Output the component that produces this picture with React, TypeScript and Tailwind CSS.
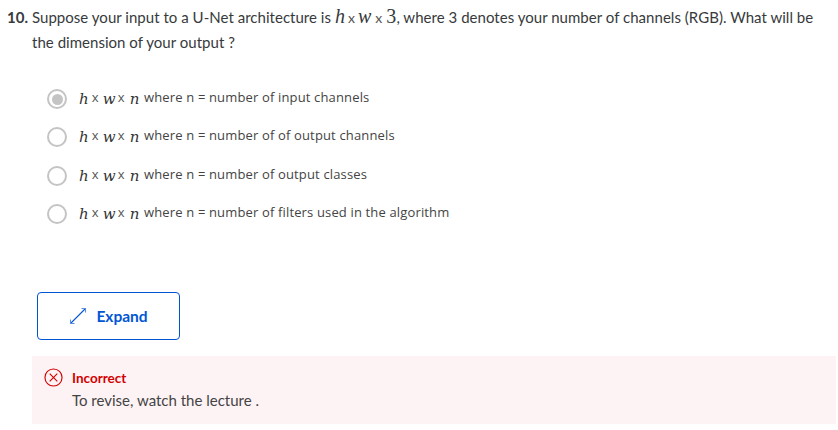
import type { ReactNode } from 'react';

const options = [
  { text: 'where n = number of input channels', selected: true },
  { text: 'where n = number of of output channels', selected: false },
  { text: 'where n = number of output classes', selected: false },
  { text: 'where n = number of filters used in the algorithm', selected: false },
];

function MathVar({ children }: { children: ReactNode }) {
  return <span className="font-['DejaVu_Serif',serif] italic text-[15px] text-[#333] align-[-2px]">{children}</span>;
}

function Formula() {
  return (
    <span className="inline-block w-[65px] whitespace-nowrap">
      <MathVar>h</MathVar>
      <span className="ml-[3px] mr-[4px] text-[#555]">x</span>
      <MathVar>w</MathVar>
      <span className="ml-[2px] mr-[5px] text-[#555]">x</span>
      <MathVar>n</MathVar>
    </span>
  );
}

export default function App() {
  return (
    <div className="font-['Lato','Noto_Sans',sans-serif] w-[838px] h-[430px] bg-white overflow-hidden text-[#373a3c]">
      {/* Question */}
      <div className="flex pl-[7px] pt-[5px] pr-[12px] text-[15px] leading-[24px]">
        <span className="w-[25px] shrink-0 font-bold whitespace-nowrap">10.</span>
        <p className="tracking-[0.03px]">
          Suppose your input to a U-Net architecture is{' '}
          <span className="font-['Liberation_Serif',serif] italic text-[20px] leading-[20px]">h</span>
          <span className="mx-[3px] text-[14px] text-[#555]">x</span>
          <span className="font-['Liberation_Serif',serif] italic text-[20px] leading-[20px]">w</span>
          <span className="mx-[4px] text-[14px] text-[#555]">x</span>
          <span className="font-['Liberation_Serif',serif] text-[20px] leading-[20px]">3</span>, where 3 denotes your number of channels (RGB). What will be the dimension of your output ?
        </p>
      </div>

      {/* Options */}
      <div className="mt-[35px] pl-[47px] flex flex-col gap-[18.4px]">
        {options.map((o) => (
          <label key={o.text} className="flex items-center h-[20px] gap-[12px]">
            <span className="w-[20px] h-[20px] rounded-full border-2 border-[#c4c4c4] flex items-center justify-center shrink-0">
              {o.selected && <span className="w-[11px] h-[11px] rounded-full bg-[#c4c4c4]" />}
            </span>
            <span className="font-['Open_Sans',sans-serif] text-[13px] tracking-[0.15px] text-[#444] whitespace-nowrap">
              <Formula />
              {o.text}
            </span>
          </label>
        ))}
      </div>

      {/* Expand */}
      <button className="mt-[68px] ml-[37px] w-[143px] h-[48px] rounded-[4px] border border-[#0056d2] flex items-center justify-center gap-[9px] text-[#0056d2] font-bold text-[15.5px]">
        <svg viewBox="0 0 18 18" className="w-[18px] h-[18px]" fill="none" strokeWidth="1.1">
          <path d="M2 16L16 2" stroke="#0056d2" />
          <path d="M12.5 1.5H16.5V5.5M1.5 12.5V16.5H5.5" stroke="#5b8fe0" />
        </svg>
        Expand
      </button>

      {/* Feedback */}
      <div className="mt-[16px] ml-[32px] w-[804px] h-[68px] bg-[#fdf3f4] pl-[12px] pt-[12px] flex gap-[9px]">
        <svg viewBox="0 0 20 20" className="w-[19px] h-[19px] shrink-0 text-[#d30001]" fill="none" stroke="currentColor" strokeWidth="1.2">
          <circle cx="10" cy="10" r="9" />
          <path d="M6 6l8 8M14 6l-8 8" />
        </svg>
        <div className="pt-[1px]">
          <div className="text-[13.5px] font-bold text-[#d30001] leading-[18px]">Incorrect</div>
          <div className="text-[15px] text-[#444] leading-[26px]">To revise, watch the lecture .</div>
        </div>
      </div>
    </div>
  );
}
